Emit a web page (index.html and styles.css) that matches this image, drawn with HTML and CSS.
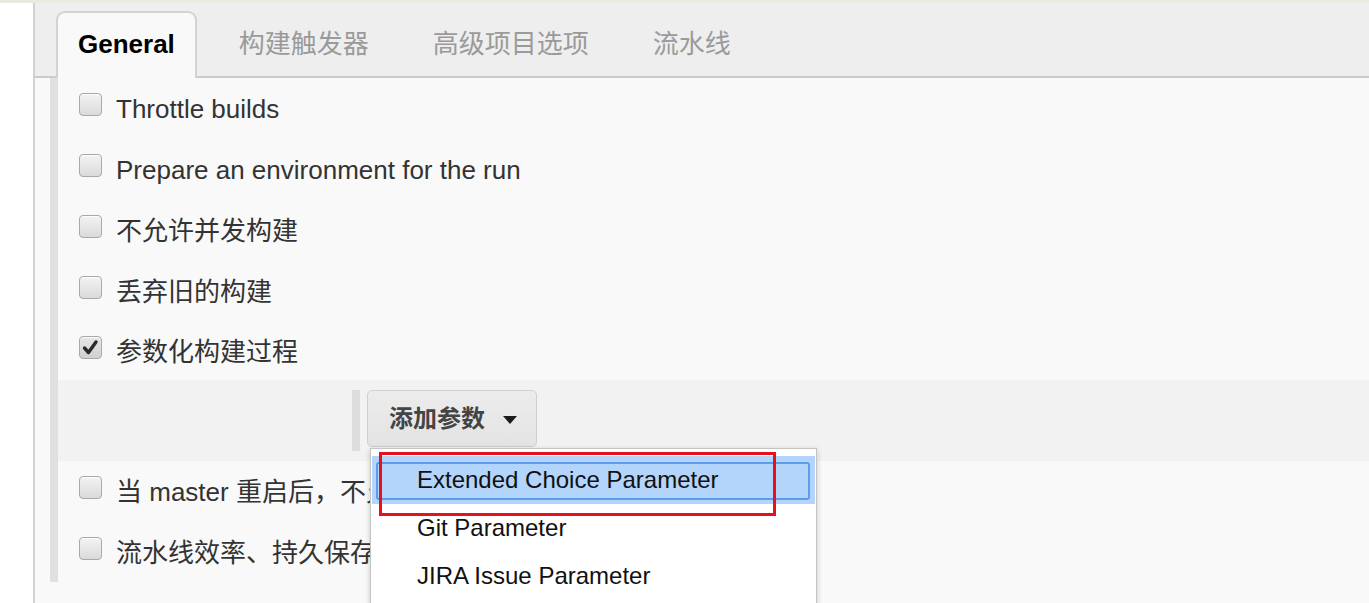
FILE: index.html
```html
<!DOCTYPE html>
<html>
<head>
<meta charset="utf-8">
<link rel="stylesheet" href="styles.css">
</head>
<body>
<div class="topstrip"></div>
<div class="page">
  <div class="gutter"></div>
  <div class="main">
    <div class="tabbar">
      <div class="tab active">General</div>
      <div class="tab">构建触发器</div>
      <div class="tab">高级项目选项</div>
      <div class="tab">流水线</div>
    </div>
    <div class="section">
      <div class="rows">
        <div class="row"><span class="cb"></span><span class="label">Throttle builds</span></div>
        <div class="row"><span class="cb"></span><span class="label">Prepare an environment for the run</span></div>
        <div class="row"><span class="cb"></span><span class="label">不允许并发构建</span></div>
        <div class="row"><span class="cb"></span><span class="label">丢弃旧的构建</span></div>
        <div class="row short"><span class="cb checked"><svg viewBox="0 0 23 23" width="23" height="23"><path d="M5.5 12 L9.5 16.5 L17 6" fill="none" stroke="#2a2a2a" stroke-width="3.4" stroke-linecap="round" stroke-linejoin="round"/></svg></span><span class="label">参数化构建过程</span></div>
        <div class="params">
          <div class="param-inner">
            <div class="param-bar"></div>
            <div class="dd-wrap">
              <button class="addbtn">添加参数 <span class="caret"></span></button>
              <div class="menu">
                <div class="item sel"><span class="sel-ring"></span>Extended Choice Parameter</div>
                <div class="item">Git Parameter</div>
                <div class="item">JIRA Issue Parameter</div>
              </div>
              <div class="annot"></div>
            </div>
          </div>
        </div>
        <div class="row"><span class="cb"></span><span class="label">当 master 重启后，不允许恢复流水线</span></div>
        <div class="row"><span class="cb"></span><span class="label">流水线效率、持久保存设置覆盖</span></div>
      </div>
    </div>
  </div>
</div>
</body>
</html>
```

FILE: styles.css
```css
html, body {
  margin: 0;
  padding: 0;
  background: #ffffff;
  overflow: hidden;
  height: 603px;
}
body {
  font-family: "Liberation Sans", Arial, "Noto Sans CJK SC", sans-serif;
  color: #333;
}
.topstrip {
  height: 3px;
  background: #e9ebe0;
}
.page {
  display: flex;
  height: 600px;
}
.gutter {
  width: 33px;
  flex: none;
  background: #fff;
}
.main {
  flex: 1;
  border-left: 2px solid #d2d2d2;
  background: #f9f9f9;
  display: flex;
  flex-direction: column;
}
.tabbar {
  height: 73px;
  background: #eeeeee;
  border-bottom: 2px solid #cbcbcb;
  display: flex;
  align-items: flex-end;
  padding-left: 21px;
  gap: 20px;
  box-sizing: content-box;
}
.tab {
  font-family: "Liberation Sans", Arial, "Noto Sans CJK SC", sans-serif;
  font-size: 26px;
  line-height: 30px;
  color: #9a9a9a;
  padding: 0 22px 3px 22px;
  height: 65px;
  display: flex;
  align-items: center;
  margin-bottom: -2px;
  box-sizing: border-box;
}
.tab.active {
  color: #000;
  font-weight: bold;
  background: #f9f9f9;
  border: 2px solid #d3d3d3;
  border-bottom: none;
  border-radius: 9px 9px 0 0;
  height: 67px;
  padding: 0 20px 3px 20px;
  margin-bottom: -2px;
}
.section {
  flex: 1;
  padding-left: 15px;
}
.rows {
  border-left: 8px solid #e0e0e0;
  height: 504px;
  display: flex;
  flex-direction: column;
}
.row {
  height: 61px;
  flex: none;
  display: flex;
  align-items: center;
  padding-left: 21px;
}
.row.short {
  height: 58px;
  padding-top: 2px;
  box-sizing: border-box;
}
.cb {
  width: 21px;
  height: 21px;
  flex: none;
  border: 1px solid #a9a9a9;
  border-radius: 4px;
  background: linear-gradient(#f3f3f3, #dadada);
  box-shadow: inset 0 1px 1px rgba(255,255,255,0.8);
  margin-bottom: 9px;
  margin-right: 14px;
  position: relative;
  overflow: hidden;
}
.cb.checked {
  background: linear-gradient(#e6e6e6, #d0d0d0);
}
.cb svg {
  display: block;
  margin: -1px;
}
.label {
  font-size: 26px;
  line-height: 30px;
  color: #333;
  white-space: nowrap;
}
.params {
  height: 81px;
  flex: none;
  background: #f2f2f2;
  display: flex;
  align-items: flex-start;
  position: relative;
  z-index: 2;
}
.param-inner {
  margin-left: 294px;
  margin-top: 10px;
  display: flex;
  gap: 7px;
}
.param-bar {
  width: 8px;
  height: 61px;
  background: #dddddd;
}
.dd-wrap {
  position: relative;
}
.addbtn {
  width: 170px;
  height: 57px;
  border: 1px solid #cfcfcf;
  border-radius: 5px;
  background: linear-gradient(#ececec, #e3e3e3);
  font-family: "Liberation Sans", Arial, "Noto Sans CJK SC", sans-serif;
  font-size: 24px;
  font-weight: bold;
  color: #444;
  display: flex;
  align-items: center;
  padding: 0 0 0 21px;
  gap: 18px;
  line-height: 28px;
}
.caret {
  width: 0;
  height: 0;
  border-left: 7px solid transparent;
  border-right: 7px solid transparent;
  border-top: 8px solid #1a1a1a;
  margin-top: 2px;
}
.menu {
  position: absolute;
  left: 3px;
  top: 58px;
  width: 445px;
  height: 160px;
  background: #fff;
  border: 1px solid #c4c4c4;
  box-shadow: 0 2px 6px rgba(0,0,0,0.2);
  padding-top: 7px;
  font-family: "Liberation Sans", Arial, sans-serif;
  font-size: 24px;
  color: #111;
}
.item {
  height: 48px;
  display: flex;
  align-items: center;
  padding-left: 45px;
  margin: 0 1px;
  position: relative;
}
.item.sel {
  background: #b3d4fb;
}
.sel-ring {
  position: absolute;
  left: 4px;
  right: 5px;
  top: 6px;
  bottom: 4px;
  border: 2px solid #5d9cec;
  border-radius: 3px;
}
.annot {
  position: absolute;
  left: 12px;
  top: 62px;
  width: 391px;
  height: 58px;
  border: 3px solid #e8101a;
}
```
